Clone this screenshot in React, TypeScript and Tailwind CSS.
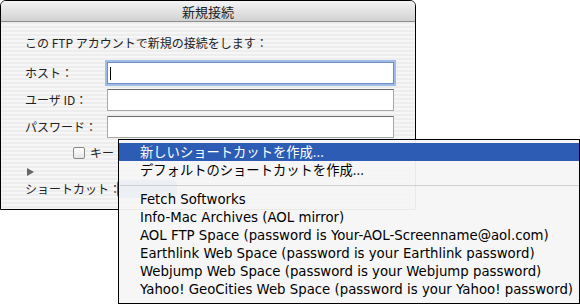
import { useState } from "react";

const stripes =
  "bg-[repeating-linear-gradient(180deg,#ededed_0px,#ededed_2px,#f6f6f6_2px,#f6f6f6_4px)]";

export default function App() {
  const [host, setHost] = useState("");
  const [active, setActive] = useState(0);

  const fields = [
    { label: "ホスト：", focused: true },
    { label: "ユーザ ID：", focused: false },
    { label: "パスワード：", focused: false },
  ];

  const shortcuts = [
    "Fetch Softworks",
    "Info-Mac Archives (AOL mirror)",
    "AOL FTP Space (password is Your-AOL-Screenname@aol.com)",
    "Earthlink Web Space (password is your Earthlink password)",
    "Webjump Web Space (password is your Webjump password)",
    "Yahoo! GeoCities Web Space (password is your Yahoo! password)",
  ];

  return (
    <div className="relative w-[580px] h-[304px] bg-white overflow-hidden font-['Noto_Sans_CJK_JP',sans-serif]">
      {/* dialog */}
      <div className="w-[416px] h-[210px] border border-black rounded-t-[6px] overflow-hidden flex flex-col">
        <div className="h-[21px] shrink-0 flex items-center justify-center bg-gradient-to-b from-[#f4f4f4] to-[#d2d2d2] border-b border-[#8c8c8c] text-[13px] text-[#222] leading-none">
          新規接続
        </div>
        <div className={`flex-1 ${stripes} pl-[24px] pr-[21px] pt-[12px] text-[12px] text-[#222] leading-none`}>
          <div className="h-[18px] flex items-center">この FTP アカウントで新規の接続をします：</div>

          <div className="mt-[10px] flex flex-col gap-[5px]">
            {fields.map((f) => (
              <div key={f.label} className="flex items-center h-[22px]">
                <span className="w-[82px] shrink-0">{f.label}</span>
                {f.focused ? (
                  <div className="relative flex-1 h-[22px] bg-white border border-[#6f8fc4] shadow-[0_0_0_2px_#9fbde6]">
                    <input
                      value={host}
                      onChange={(e) => setHost(e.target.value)}
                      className="w-full h-full outline-none px-[2px] text-[12px] bg-transparent"
                    />
                    <span className="absolute left-[2px] top-[4px] w-px h-[13px] bg-black" />
                  </div>
                ) : (
                  <div className="flex-1 h-[22px] bg-white border border-[#a8a8a8] border-t-[#6c6c6c]" />
                )}
              </div>
            ))}
          </div>

          <div className="mt-[8px] ml-[48px] flex items-center gap-[5px] h-[14px]">
            <span className="w-[12px] h-[12px] shrink-0 border border-[#8a8a8a] rounded-[2px] bg-gradient-to-b from-white to-[#e6e6e6]" />
            {/* the rest of the label sits under the open menu */}
            <span className="whitespace-nowrap">キー</span>
          </div>

          <div className="mt-[8px] ml-[2px] w-0 h-0 border-y-[4px] border-y-transparent border-l-[7px] border-l-[#666]" />
          <div className="mt-[5px] flex items-center h-[16px]">
            <span className="w-[92px] shrink-0 whitespace-nowrap">ショートカット：</span>
            <div className="w-[60px] h-[18px] rounded-[4px] bg-[#3a6fc4]" />
          </div>
        </div>
      </div>

      {/* popup menu */}
      <div className="absolute left-[118px] top-[139px] w-[462px] h-[165px] border border-black bg-[#f5f5f5]/95 pt-[3px] pb-[3px] text-[13.3px] text-black leading-none">
        {["新しいショートカットを作成...", "デフォルトのショートカットを作成..."].map((t, i) => (
          <div
            key={t}
            onMouseEnter={() => setActive(i)}
            className={`h-[18px] pl-[21px] flex items-center ${
              active === i ? "bg-[#2c5cb3] text-white" : ""
            }`}
          >
            {t}
          </div>
        ))}
        <div className="h-[12px] flex items-center">
          <div className="w-full h-px bg-[#d0d0d0]" />
        </div>
        {shortcuts.map((s, i) => (
          <div
            key={s}
            onMouseEnter={() => setActive(i + 2)}
            className={`h-[18px] pl-[21px] flex items-center whitespace-nowrap font-['DejaVu_Sans',sans-serif] text-[13.3px] ${
              active === i + 2 ? "bg-[#2c5cb3] text-white" : ""
            }`}
          >
            {s}
          </div>
        ))}
      </div>
    </div>
  );
}
